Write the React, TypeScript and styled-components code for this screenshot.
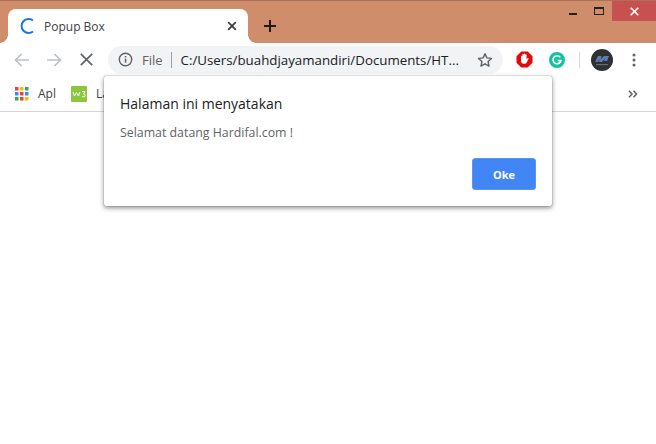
import * as React from 'react';
import styled, { createGlobalStyle } from 'styled-components';

const GlobalStyle = createGlobalStyle`
  html, body {
    margin: 0;
    padding: 0;
    background: #fff;
    font-family: "Open Sans", "Noto Sans", sans-serif;
  }
`;

const Window = styled.div`
  position: relative;
  width: 656px;
  height: 444px;
  overflow: hidden;
  background: #fff;
`;

const TabStrip = styled.div`
  display: flex;
  align-items: flex-end;
  height: 43px;
  box-sizing: border-box;
  padding-left: 8px;
  background: #cf8d6b;
  border-top: 1px solid #a8735a;
`;

const Tab = styled.div`
  position: relative;
  display: flex;
  align-items: center;
  width: 240px;
  height: 34px;
  box-sizing: border-box;
  padding: 0 11px 0 12px;
  background: #fff;
  border-radius: 8px 8px 0 0;

  &::before,
  &::after {
    content: '';
    position: absolute;
    bottom: 0;
    width: 8px;
    height: 8px;
  }
  &::before {
    left: -8px;
    background: radial-gradient(circle at 0 0, transparent 7.5px, #fff 8px);
  }
  &::after {
    right: -8px;
    background: radial-gradient(circle at 100% 0, transparent 7.5px, #fff 8px);
  }
`;

const TabTitle = styled.span`
  flex: 1;
  margin-left: 8px;
  font-size: 12px;
  color: #3c4043;
`;

const NewTab = styled.div`
  display: flex;
  align-items: center;
  justify-content: center;
  width: 20px;
  height: 20px;
  margin: 0 0 7px 12px;
`;

const WindowControls = styled.div`
  display: flex;
  align-items: center;
  height: 20px;
  margin-left: auto;
  align-self: flex-start;
`;

const ControlButton = styled.div<{ $close?: boolean }>`
  display: flex;
  align-items: center;
  justify-content: center;
  width: ${({ $close }) => ($close ? '44px' : '26px')};
  height: 20px;
  background: ${({ $close }) => ($close ? '#c75050' : 'transparent')};
`;

const Toolbar = styled.div`
  display: flex;
  align-items: center;
  gap: 12px;
  height: 33px;
  padding-left: 12px;
  box-sizing: border-box;
  background: #fff;
`;

const NavIcon = styled.div`
  display: flex;
  flex: none;
  align-items: center;
  justify-content: center;
  width: 20px;
  height: 20px;
`;

const Omnibox = styled.div`
  display: flex;
  flex: none;
  align-items: center;
  width: 395px;
  height: 28px;
  padding: 0 10px;
  box-sizing: border-box;
  background: #f1f3f4;
  border-radius: 14px;
`;

const Scheme = styled.span`
  margin-left: 9px;
  font-size: 13px;
  color: #5f6368;
`;

const Divider = styled.span`
  width: 1px;
  height: 16px;
  margin: 0 9px 0 8px;
  background: #9aa0a6;
`;

const Url = styled.span`
  flex: 1;
  font-size: 13.3px;
  color: #202124;
  white-space: nowrap;
`;

const Extensions = styled.div`
  display: flex;
  flex: none;
  align-items: center;
  margin-left: 1px;
`;

const ExtSlot = styled.div<{ $w: number; $gap?: number }>`
  display: flex;
  flex: none;
  align-items: center;
  justify-content: center;
  width: ${({ $w }) => $w}px;
  height: 24px;
  margin-left: ${({ $gap }) => $gap ?? 0}px;
`;

const ToolbarSep = styled.span`
  flex: none;
  width: 1px;
  height: 16px;
  margin: 0 11px 0 14px;
  background: #d5d7da;
`;

const Bookmarks = styled.div`
  display: flex;
  align-items: center;
  height: 36px;
  box-sizing: border-box;
  padding: 0 18px 0 15px;
  border-bottom: 1px solid #d5d5d5;
  background: #fff;
`;

const Bookmark = styled.div`
  display: flex;
  align-items: center;
  gap: 9px;
  margin-right: 15px;
  font-size: 12px;
  color: #3c4043;
`;

const More = styled.div`
  margin-left: auto;
  display: flex;
`;

const Dialog = styled.div`
  position: absolute;
  left: 104px;
  top: 76px;
  display: flex;
  flex-direction: column;
  width: 448px;
  height: 130px;
  box-sizing: border-box;
  padding: 18px 16px 16px 16px;
  background: #fff;
  border-radius: 2px;
  box-shadow: 0 0 1px rgba(0, 0, 0, 0.6), 0 2px 5px rgba(0, 0, 0, 0.45);
`;

const DialogTitle = styled.div`
  font-size: 14px;
  line-height: 20px;
  color: #202124;
`;

const DialogText = styled.div`
  margin-top: 10px;
  font-size: 12.35px;
  line-height: 18px;
  color: #5f6368;
`;

const DialogActions = styled.div`
  display: flex;
  justify-content: flex-end;
  margin-top: auto;
`;

const OkButton = styled.button`
  width: 64px;
  height: 32px;
  padding: 0;
  border: 1px solid #5b97ee;
  border-radius: 3px;
  background: #4285f4;
  color: #fff;
  font-family: inherit;
  font-size: 11px;
  font-weight: 700;
`;

const DOTS = ['#ea4335', '#fbbc05', '#34a853', '#4285f4', '#ea4335', '#4285f4', '#34a853', '#ea4335', '#fbbc05'];

const App: React.FC = () => (
  <Window>
    <GlobalStyle />
    <TabStrip>
      <Tab>
        <svg width="16" height="16" viewBox="0 0 16 16" fill="none">
          <path d="M13 2.6 A7 7 0 1 0 13 13.4" stroke="#1a73e8" strokeWidth="2" />
        </svg>
        <TabTitle>Popup Box</TabTitle>
        <svg width="10" height="10" viewBox="0 0 10 10">
          <path d="M1.2 1.2 8.8 8.8M8.8 1.2 1.2 8.8" stroke="#3c4043" strokeWidth="1.8" />
        </svg>
      </Tab>
      <NewTab>
        <svg width="12" height="12" viewBox="0 0 12 12">
          <path d="M6 0v12M0 6h12" stroke="#1d1a18" strokeWidth="2" />
        </svg>
      </NewTab>
      <WindowControls>
        <ControlButton>
          <svg width="9" height="9" viewBox="0 0 9 9">
            <rect x="0" y="6" width="8" height="2" fill="#222" />
          </svg>
        </ControlButton>
        <ControlButton>
          <svg width="10" height="9" viewBox="0 0 10 9" fill="none">
            <rect x="0.5" y="0.5" width="9" height="7" stroke="#222" />
            <rect x="0" y="0" width="10" height="2" fill="#222" />
          </svg>
        </ControlButton>
        <ControlButton $close>
          <svg width="9" height="9" viewBox="0 0 9 9">
            <path d="M.7.7 8.3 8.3M8.3.7.7 8.3" stroke="#fff" strokeWidth="1.6" />
          </svg>
        </ControlButton>
      </WindowControls>
    </TabStrip>
    <Toolbar>
      <NavIcon>
        <svg width="16" height="14" viewBox="0 0 16 14" fill="none" stroke="#bdc1c6" strokeWidth="1.7">
          <path d="M15 7H2M7.500 1 1.500 7l6 6" />
        </svg>
      </NavIcon>
      <NavIcon>
        <svg width="16" height="14" viewBox="0 0 16 14" fill="none" stroke="#bdc1c6" strokeWidth="1.7">
          <path d="M1 7h13M8.500 1l6 6-6 6" />
        </svg>
      </NavIcon>
      <NavIcon>
        <svg width="13" height="13" viewBox="0 0 13 13">
          <path d="M.8.8 12.2 12.2M12.2.8.8 12.2" stroke="#5f6368" strokeWidth="1.7" />
        </svg>
      </NavIcon>
      <Omnibox>
        <svg width="15" height="15" viewBox="0 0 15 15" fill="none">
          <circle cx="7.5" cy="7.5" r="6.2" stroke="#5f6368" strokeWidth="1.4" />
          <rect x="6.8" y="6.6" width="1.5" height="4.2" fill="#5f6368" />
          <rect x="6.8" y="4" width="1.5" height="1.5" fill="#5f6368" />
        </svg>
        <Scheme>File</Scheme>
        <Divider />
        <Url>C:/Users/buahdjayamandiri/Documents/HT...</Url>
        <svg width="16" height="16" viewBox="0 0 16 16" fill="none">
          <path d="M8 1.7 9.9 5.9l4.6.5-3.4 3.1.9 4.6L8 11.8l-4 2.3.9-4.6L1.5 6.4l4.6-.5Z" stroke="#5f6368" strokeWidth="1.4" strokeLinejoin="round" />
        </svg>
      </Omnibox>
      <Extensions>
        <ExtSlot $w={17}>
          <svg width="17" height="17" viewBox="0 0 17 17">
            <path d="M5.3.5h6.400l4.800 4.800v6.400l-4.800 4.800H5.300L.5 11.700V5.300Z" fill="#e4080a" />
            <path d="M5 8.500V5.500a.7.7 0 0 1 1.400 0V3.800a.7.7 0 0 1 1.400 0V3.200a.7.7 0 0 1 1.400 0v.800a.7.7 0 0 1 1.400 0v4.300l.9-1c.6-.6 1.400 0 1 .7l-1.700 3.300c-.5 1-1.200 1.500-2.300 1.500H7.800C6 12.800 5 11.800 5 10Z" fill="#fff" />
          </svg>
        </ExtSlot>
        <ExtSlot $w={16} $gap={16}>
          <svg width="16" height="16" viewBox="0 0 16 16" fill="none">
            <circle cx="8" cy="8" r="8" fill="#15c39a" />
            <path d="M11.200 5.300A4 4 0 1 0 12 8.500H8.700" stroke="#fff" strokeWidth="1.600" />
          </svg>
        </ExtSlot>
        <ToolbarSep />
        <ExtSlot $w={22}>
          <svg width="22" height="22" viewBox="0 0 22 22">
            <circle cx="11" cy="11" r="11" fill="#2f3033" />
            <path d="M4 13 7 7h3.500l-.5 3 3-3h5l-2 5h-3l1-2.500-3 3.500H8l.5-3L7 13Z" fill="#5d7cb5" />
            <path d="M5 15h12v1.200H5Z" fill="#666a70" />
          </svg>
        </ExtSlot>
        <ExtSlot $w={42}>
          <svg width="4" height="14" viewBox="0 0 4 14" fill="#5f6368">
            <circle cx="2" cy="2" r="1.500" />
            <circle cx="2" cy="7" r="1.500" />
            <circle cx="2" cy="12" r="1.500" />
          </svg>
        </ExtSlot>
      </Extensions>
    </Toolbar>
    <Bookmarks>
      <Bookmark>
        <svg width="14" height="14" viewBox="0 0 14 14">
          {DOTS.map((color, i) => (
            <rect key={i} x={(i % 3) * 5} y={Math.floor(i / 3) * 5} width="3.500" height="3.500" fill={color} />
          ))}
        </svg>
        Apl
      </Bookmark>
      <Bookmark>
        <svg width="16" height="16" viewBox="0 0 16 16">
          <rect width="16" height="16" rx="1" fill="#8cc63f" />
          <path d="M2 6l1.500 4L5.500 6.500 7.500 10 9 6M11 5.500h3L12.500 8c1.500 0 1.800 1 1.500 2-.3 1-1.800 1-2.800.3" stroke="#fff" strokeWidth="1" fill="none" />
        </svg>
        La
      </Bookmark>
      <More>
        <svg width="10" height="8" viewBox="0 0 10 8" fill="none" stroke="#5f6368" strokeWidth="1.600">
          <path d="M1 .8 4 4 1 7.200M5.500.8 8.500 4l-3 3.200" />
        </svg>
      </More>
    </Bookmarks>
    <Dialog>
      <DialogTitle>Halaman ini menyatakan</DialogTitle>
      <DialogText>Selamat datang Hardifal.com !</DialogText>
      <DialogActions>
        <OkButton>Oke</OkButton>
      </DialogActions>
    </Dialog>
  </Window>
);

export default App;
